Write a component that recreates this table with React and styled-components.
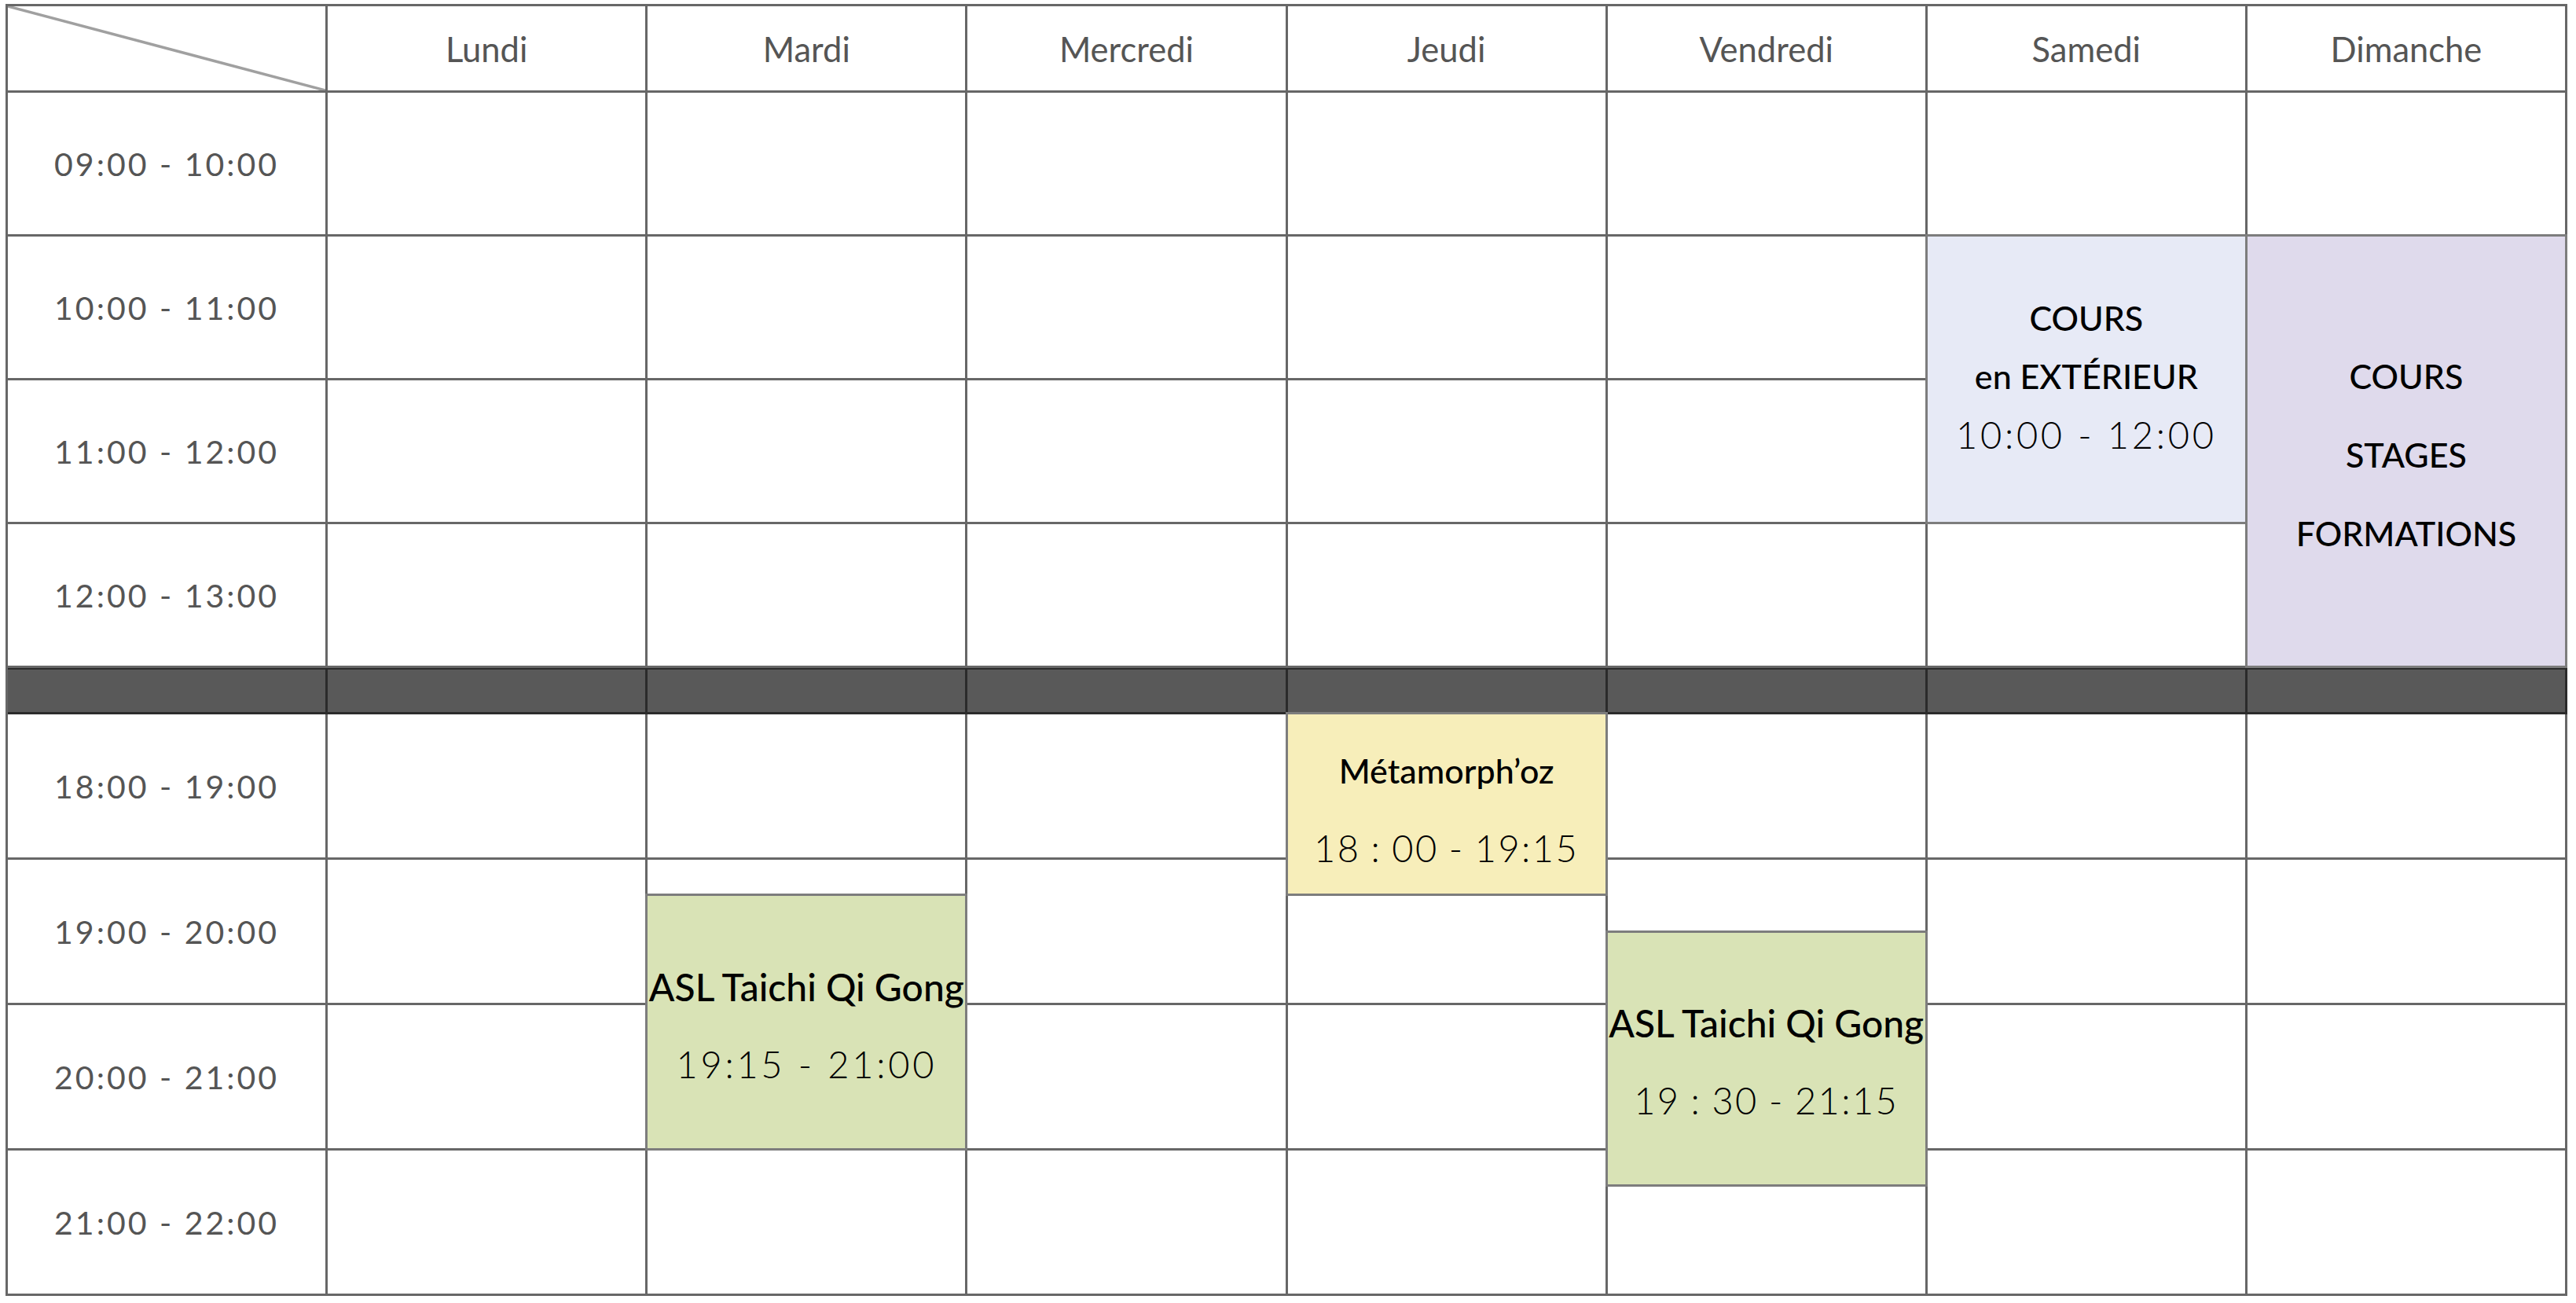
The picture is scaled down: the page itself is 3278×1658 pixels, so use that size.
import React from "react";
import styled, { createGlobalStyle } from "styled-components";

const days = ["Lundi", "Mardi", "Mercredi", "Jeudi", "Vendredi", "Samedi", "Dimanche"];
const morning = ["09:00 - 10:00", "10:00 - 11:00", "11:00 - 12:00", "12:00 - 13:00"];
const evening = ["18:00 - 19:00", "19:00 - 20:00", "20:00 - 21:00", "21:00 - 22:00"];

// grid rows: 1 = header, 2..17 = 09:00-13:00 by quarter, 18 = break, 19..34 = 18:00-22:00
const slot = (h, m) => (h < 14 ? 2 + (h - 9) * 4 : 19 + (h - 18) * 4) + m / 15;

const events = [
    { col: 7, from: [10, 0], to: [12, 0], bg: "#e7eaf6", kind: "outdoor", lines: ["COURS", "en EXTÉRIEUR"], time: "10:00 - 12:00" },
    { col: 8, from: [10, 0], to: [13, 0], bg: "#dfdaec", kind: "stack", lines: ["COURS", "STAGES", "FORMATIONS"] },
    { col: 5, from: [18, 0], to: [19, 15], bg: "#f7eeba", kind: "small", lines: ["Métamorph’oz"], time: "18 : 00 - 19:15", tight: true },
    { col: 3, from: [19, 15], to: [21, 0], bg: "#d9e3b6", kind: "big", lines: ["ASL Taichi Qi Gong"], time: "19:15 - 21:00" },
    { col: 6, from: [19, 30], to: [21, 15], bg: "#d9e3b6", kind: "big", lines: ["ASL Taichi Qi Gong"], time: "19 : 30 - 21:15", tight: true },
];

function Planning() {
    return (
        <Grid>
            <Cell $col={1} $row={1} $span={1}>
                <Diagonal viewBox="0 0 100 100" preserveAspectRatio="none">
                    <line x1="0" y1="0" x2="100" y2="100" stroke="#a0a0a0" strokeWidth="3.5" vectorEffect="non-scaling-stroke" />
                </Diagonal>
            </Cell>
            {days.map((d, i) => (
                <Cell key={d} $col={i + 2} $row={1} $span={1}>{d}</Cell>
            ))}

            {morning.map((label, r) => (
                <React.Fragment key={label}>
                    <Cell $col={1} $row={2 + r * 4} $span={4} $time>{label}</Cell>
                    {days.map((d, i) => (
                        <Cell key={d} $col={i + 2} $row={2 + r * 4} $span={4} />
                    ))}
                </React.Fragment>
            ))}

            {[0, 1, 2, 3, 4, 5, 6, 7].map(i => (
                <Break key={i} $col={i + 1} />
            ))}

            {evening.map((label, r) => (
                <React.Fragment key={label}>
                    <Cell $col={1} $row={19 + r * 4} $span={4} $time>{label}</Cell>
                    {days.map((d, i) => (
                        <Cell key={d} $col={i + 2} $row={19 + r * 4} $span={4} />
                    ))}
                </React.Fragment>
            ))}

            {events.map((ev, i) => (
                <Event
                    key={i}
                    $col={ev.col}
                    $start={slot(...ev.from)}
                    $end={slot(...ev.to)}
                    $bg={ev.bg}
                    $kind={ev.kind}
                >
                    {ev.lines.map(l => <Title key={l} $kind={ev.kind}>{l}</Title>)}
                    {ev.time && <Hours $kind={ev.kind} $tight={ev.tight}>{ev.time}</Hours>}
                </Event>
            ))}
        </Grid>
    );
}

export default function App() {
    return (
        <>
            <GlobalStyle />
            <Planning />
        </>
    );
}

const GlobalStyle = createGlobalStyle`
    body {
        margin: 0;
        background: #ffffff;
        font-family: Lato, "Open Sans", sans-serif;
    }
    * { box-sizing: border-box; }
`;

const Grid = styled.div`
    display: grid;
    grid-template-columns: repeat(8, 1fr);
    grid-template-rows: 110px repeat(16, 45.75px) 59px repeat(16, 46.25px);
    width: 3260px;
    margin: 5px 0 0 7px;
    border-top: 3px solid #676767;
    border-left: 3px solid #676767;
`;

const Cell = styled.div`
    grid-column: ${p => p.$col};
    grid-row: ${p => p.$row} / span ${p => p.$span};
    border-right: 3px solid #676767;
    border-bottom: 3px solid #676767;
    display: flex;
    align-items: center;
    justify-content: center;
    font-family: Lato, sans-serif;
    font-size: ${p => (p.$time ? "41px" : "43.5px")};
    letter-spacing: ${p => (p.$time ? "3px" : "0")};
    color: #555555;
    overflow: hidden;
`;

const Diagonal = styled.svg`
    display: block;
    width: 100%;
    height: 100%;
`;

const Break = styled.div`
    grid-column: ${p => p.$col};
    grid-row: 18;
    background: #595959;
    border-right: 3px solid #2b2b2b;
    border-bottom: 3px solid #2b2b2b;
    box-shadow: inset 0 2px 0 #2b2b2b;
`;

const pads = { big: "8px 0 0", small: "14px 0 0", stack: "10px 0 0", outdoor: "0 0 8px" };

const Event = styled.div`
    grid-column: ${p => p.$col};
    grid-row: ${p => p.$start} / ${p => p.$end};
    margin: -3px 0 0 -3px;
    background: ${p => p.$bg};
    border: 3px solid #7d7d7d;
    display: flex;
    flex-direction: column;
    align-items: center;
    justify-content: center;
    text-align: center;
    color: #000000;
    font-family: Lato, sans-serif;
    white-space: nowrap;
    padding: ${p => pads[p.$kind]};
`;

const Title = styled.div`
    font-weight: 500;
    font-size: ${p => (p.$kind === "big" ? "48px" : "43px")};
    line-height: ${p => (p.$kind === "stack" ? "100px" : p.$kind === "outdoor" ? "74px" : "98px")};
`;

const Hours = styled.div`
    font-weight: 300;
    font-size: 47px;
    letter-spacing: ${p => (p.$tight ? "2.4px" : "3.7px")};
    word-spacing: ${p => (p.$tight ? "-2px" : "0")};
    line-height: ${p => (p.$kind === "outdoor" ? "74px" : "98px")};
`;
